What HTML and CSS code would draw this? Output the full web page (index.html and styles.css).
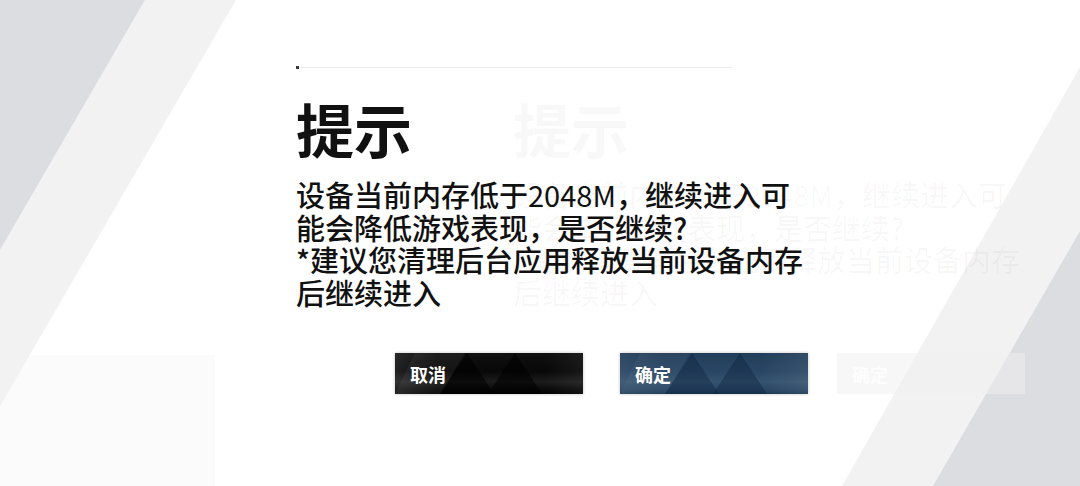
FILE: index.html
```html
<!DOCTYPE html>
<html lang="zh-CN">
<head>
<meta charset="utf-8">
<title>提示</title>
<link rel="stylesheet" href="styles.css">
</head>
<body>
<div class="screen">
  <svg class="bg" width="1080" height="486" viewBox="0 0 1080 486" aria-hidden="true">
    <rect x="0" y="355" width="215" height="131" fill="#fbfbfb"/>
    <polygon points="145,0 236,0 0,406 0,250" fill="#f2f2f3"/>
    <polygon points="0,0 145,0 0,250" fill="#dcdde0"/>
    <polygon points="1080,67 1080,486 842,486" fill="#f2f2f3"/>
    <polygon points="1080,231 1080,486 933,486" fill="#dcdde0"/>
  </svg>

  <div class="layer ghost" aria-hidden="true">
    <div class="dialog">
      <div class="rule hidden"><span class="dot"></span><span class="line"></span></div>
      <h1 class="title">提示</h1>
      <p class="msg">设备当前内存低于<span class="num">2048M</span>，继续进入可<br>能会降低游戏表现，是否继续?<br>*建议您清理后台应用释放当前设备内存<br>后继续进入</p>
      <div class="actions">
        <div class="btn hidden"><span class="label">取消</span></div>
        <div class="btn ghost-btn"><span class="label">确定</span></div>
      </div>
    </div>
  </div>

  <div class="layer main">
    <div class="dialog">
      <div class="rule"><span class="dot"></span><span class="line"></span></div>
      <h1 class="title">提示</h1>
      <p class="msg">设备当前内存低于<span class="num">2048M</span>，继续进入可<br>能会降低游戏表现，是否继续?<br>*建议您清理后台应用释放当前设备内存<br>后继续进入</p>
      <div class="actions">
        <button class="btn btn-cancel">
          <svg class="tri" width="188" height="41" viewBox="0 0 188 41" aria-hidden="true">
            <polygon points="20,0 70,0 45,41 0,41" fill="rgba(255,255,255,0.05)"/>
            <polygon points="72,0 99,41 45,41" fill="rgba(0,0,0,0.55)"/>
            <polygon points="120,0 147,41 93,41" fill="rgba(0,0,0,0.55)"/>
          </svg>
          <span class="label">取消</span>
        </button>
        <button class="btn btn-ok">
          <svg class="tri" width="188" height="41" viewBox="0 0 188 41" aria-hidden="true">
            <polygon points="20,0 70,0 45,41 0,41" fill="rgba(255,255,255,0.04)"/>
            <polygon points="72,0 99,41 45,41" fill="rgba(10,30,55,0.35)"/>
            <polygon points="120,0 147,41 93,41" fill="rgba(10,30,55,0.35)"/>
          </svg>
          <span class="label">确定</span>
        </button>
      </div>
    </div>
  </div>
</div>
</body>
</html>
```

FILE: styles.css
```css
* { box-sizing: border-box; }

html, body {
  margin: 0;
  padding: 0;
  background: #ffffff;
}

body {
  width: 1080px;
  height: 486px;
  overflow: hidden;
  font-family: "Noto Sans CJK SC", "Noto Sans", sans-serif;
  color: #111111;
}

.screen {
  display: grid;
  width: 1080px;
  height: 486px;
  overflow: hidden;
}

.screen > * {
  grid-area: 1 / 1;
}

.bg {
  display: block;
}

.layer {
  padding: 66px 0 0 296px;
}

.ghost {
  transform: translateX(217px);
  color: rgba(0, 0, 0, 0.028);
}

.hidden {
  visibility: hidden;
}

.dialog {
  width: 580px;
}

.rule {
  display: flex;
  align-items: center;
  height: 3px;
}

.dot {
  width: 3px;
  height: 3px;
  background: #3a3a3a;
}

.line {
  width: 432px;
  height: 1px;
  margin-left: 1px;
  background: #ececec;
}

.title {
  margin: 30px 0 0;
  font-size: 58px;
  line-height: 58px;
  font-weight: 700;
  letter-spacing: 0;
}

.msg {
  margin: 21px 0 0;
  font-size: 29px;
  line-height: 32.5px;
  font-weight: 500;
  white-space: nowrap;
}

.num {
  font-weight: 400;
}

.actions {
  display: flex;
  gap: 37px;
  margin-top: 45px;
  padding-left: 99px;
}

.btn {
  display: grid;
  align-items: center;
  width: 188px;
  height: 41px;
  padding: 0;
  border: 0;
  font-family: inherit;
  overflow: hidden;
}

.btn > * {
  grid-area: 1 / 1;
}

.tri {
  display: block;
}

.label {
  padding-left: 15px;
  font-size: 18px;
  font-weight: 700;
  color: #ffffff;
  text-align: left;
  line-height: 1;
  position: relative;
}

.btn-cancel {
  background:
    linear-gradient(to right, rgba(255,255,255,0.10) 0%, rgba(255,255,255,0) 22%, rgba(255,255,255,0) 80%, rgba(255,255,255,0.06) 100%),
    linear-gradient(to bottom, #101010 0%, #080808 45%, #1c1c1c 70%, #0a0a0a 88%, #030303 100%);
  box-shadow: 0 0 3px rgba(0, 0, 0, 0.25);
}

.btn-ok {
  background:
    linear-gradient(to right, rgba(255,255,255,0.06) 0%, rgba(255,255,255,0) 22%, rgba(255,255,255,0) 75%, rgba(255,255,255,0.07) 100%),
    linear-gradient(to bottom, #233e5a 0%, #294664 45%, #35536f 70%, #2a4765 88%, #1f3a55 100%);
  box-shadow: 0 0 3px rgba(0, 0, 0, 0.25);
}

.ghost-btn {
  background: rgba(239, 239, 239, 0.5);
}

.ghost-btn .label {
  color: rgba(255, 255, 255, 0.85);
}
```
